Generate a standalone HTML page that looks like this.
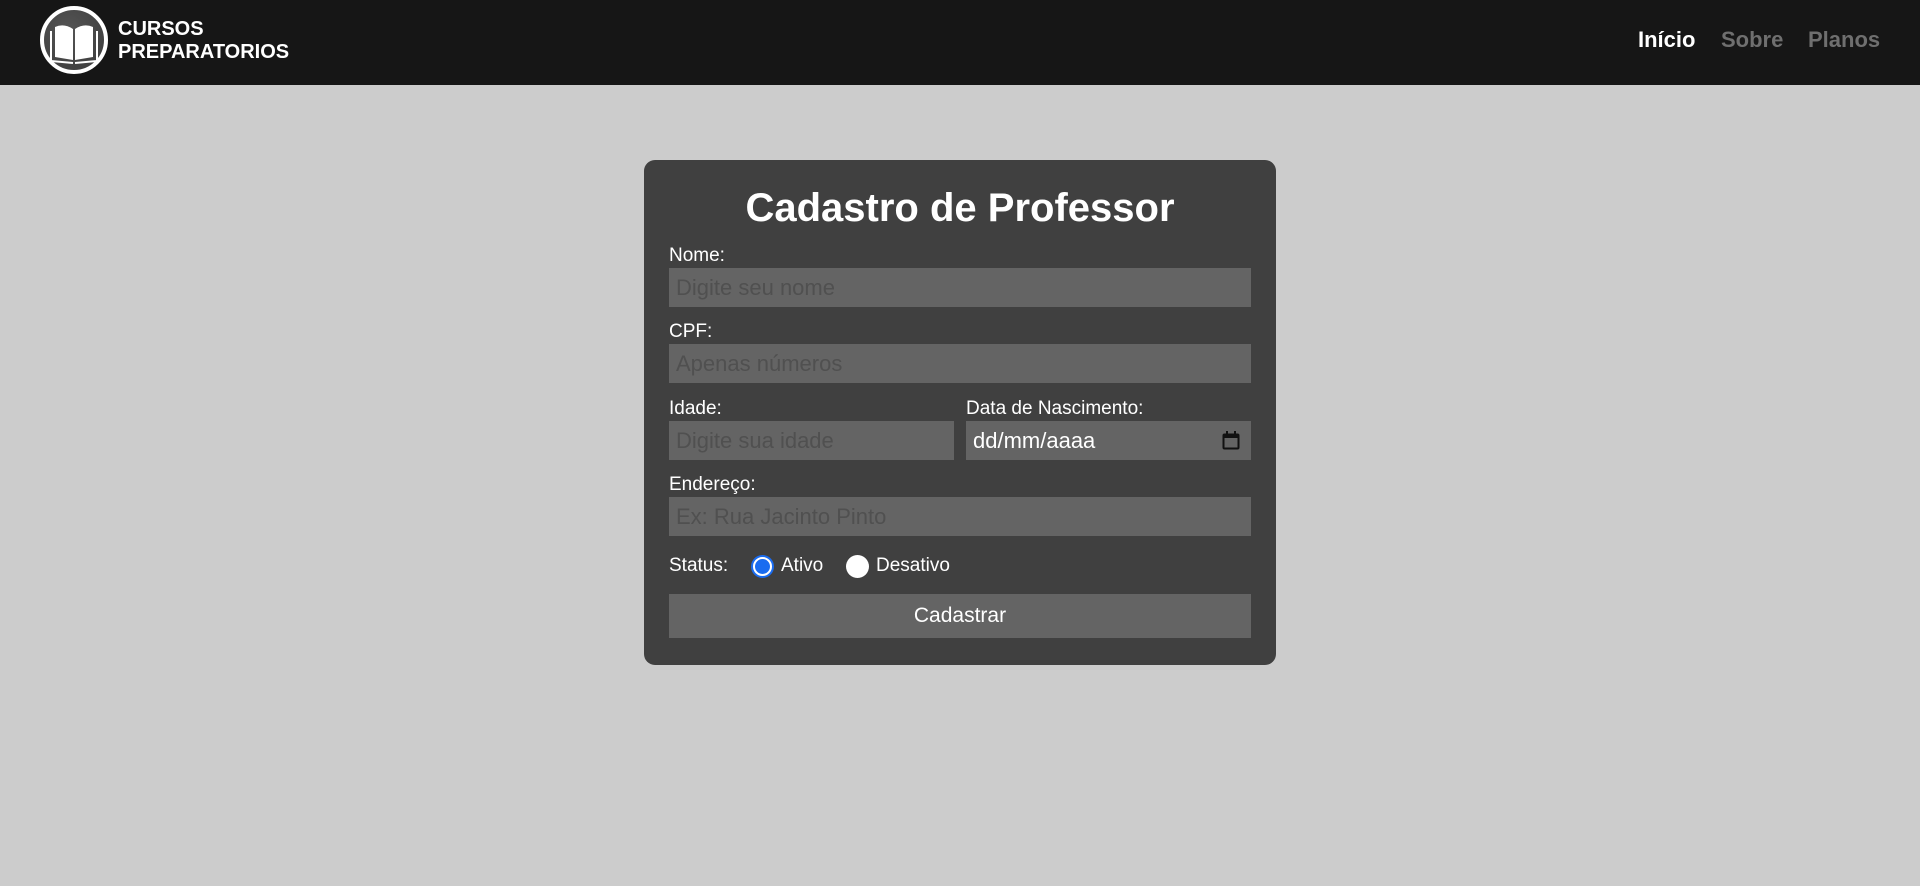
<!DOCTYPE html>
<html><head><meta charset="utf-8"><style>
*{box-sizing:border-box;margin:0;padding:0}
body{width:1920px;height:886px;background:#cccccc;font-family:"Liberation Sans",Arial,sans-serif;position:relative;overflow:hidden}
.nav{position:absolute;left:0;top:0;width:1920px;height:85px;background:#161616}
.logo{position:absolute;left:40px;top:6px;width:68px;height:68px;border-radius:50%;border:4px solid #fff;background:radial-gradient(circle at 40% 35%,#555,#3a3a3a)}
.brand{position:absolute;left:118px;top:18px;color:#fff;font-weight:bold;font-size:20px;line-height:23px}
.links a{position:absolute;top:27px;font-size:22px;font-weight:bold;color:#6f6f6f;text-decoration:none}
.card{position:absolute;left:644px;top:160px;width:632px;height:505px;background:#404040;border-radius:11px}
h1{position:absolute;width:632px;top:186px;text-align:center;color:#fff;font-size:40px;font-weight:bold}
.lbl{position:absolute;color:#fff;font-size:19px}
.inp{position:absolute;background:#646464;color:#505050;font-size:22px;padding-left:7px;display:flex;align-items:center;height:39px}
</style></head><body>
<div class="nav">
<div class="logo"><svg width="60" height="60" viewBox="0 0 60 60" style="position:absolute;left:0;top:0">
<path d="M11 17 L11 47 L29 50 L29 19 Q20 13 11 17Z M49 17 L49 47 L31 50 L31 19 Q40 13 49 17Z" fill="#fff"/>
<path d="M7 21 L7 51 L29 53 M53 21 L53 51 L31 53" fill="none" stroke="#fff" stroke-width="2"/>
</svg></div>
<div class="brand">CURSOS<br>PREPARATORIOS</div>
<div class="links"><a style="left:1638px;color:#fff">Início</a><a style="left:1721px">Sobre</a><a style="left:1808px">Planos</a></div>
</div>
<div class="card"></div>
<h1 style="left:644px">Cadastro de Professor</h1>
<div class="lbl" style="left:669px;top:245px">Nome:</div>
<div class="inp" style="left:669px;top:268px;width:582px">Digite seu nome</div>
<div class="lbl" style="left:669px;top:321px">CPF:</div>
<div class="inp" style="left:669px;top:344px;width:582px">Apenas números</div>
<div class="lbl" style="left:669px;top:398px">Idade:</div>
<div class="inp" style="left:669px;top:421px;width:285px">Digite sua idade</div>
<div class="lbl" style="left:966px;top:398px">Data de Nascimento:</div>
<div class="inp" style="left:966px;top:421px;width:285px;color:#fff">dd/mm/aaaa
<svg width="18" height="19" viewBox="0 0 18 19" style="position:absolute;left:256px;top:10px"><rect x="1.5" y="3.5" width="15" height="14" rx="1" fill="none" stroke="#111" stroke-width="2"/><rect x="1" y="3" width="16" height="4" fill="#111"/><rect x="4" y="0" width="2" height="4" fill="#111"/><rect x="12" y="0" width="2" height="4" fill="#111"/></svg></div>
<div class="lbl" style="left:669px;top:474px">Endereço:</div>
<div class="inp" style="left:669px;top:497px;width:582px">Ex: Rua Jacinto Pinto</div>
<div class="lbl" style="left:669px;top:555px">Status:</div>
<div style="position:absolute;left:751px;top:555px;width:23px;height:23px;border-radius:50%;background:#fff;border:2px solid #1a6cf0"><div style="position:absolute;left:2px;top:2px;width:15px;height:15px;border-radius:50%;background:#1a6cf0"></div></div>
<div class="lbl" style="left:781px;top:555px">Ativo</div>
<div style="position:absolute;left:846px;top:555px;width:23px;height:23px;border-radius:50%;background:#fff"></div>
<div class="lbl" style="left:876px;top:555px">Desativo</div>
<div style="position:absolute;left:669px;top:594px;width:582px;height:44px;background:#646464;color:#fff;font-size:21px;display:flex;align-items:center;justify-content:center">Cadastrar</div>
</body></html>
